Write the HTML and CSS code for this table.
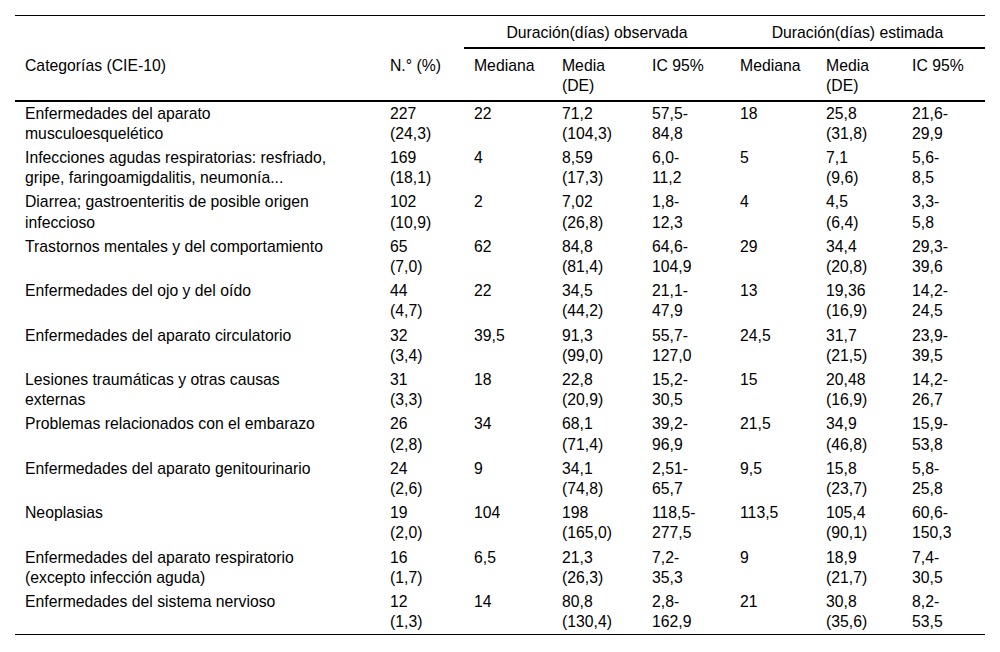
FILE: index.html
```html
<!DOCTYPE html>
<html lang="es">
<head>
<meta charset="utf-8">
<title>Duración por categorías</title>
<link rel="stylesheet" href="styles.css">
</head>
<body>
<div class="page">
<table class="data">
<colgroup>
<col class="c-cat"><col class="c-n"><col class="c-med"><col class="c-mean"><col class="c-ic"><col class="c-med2"><col class="c-mean2"><col class="c-ic2">
</colgroup>
<thead>
<tr class="group-row">
<th></th><th></th>
<th colspan="3" class="group">Duración(días) observada</th>
<th colspan="3" class="group">Duración(días) estimada</th>
</tr>
<tr class="sub-row">
<th>Categorías (CIE-10)</th>
<th>N.° (%)</th>
<th>Mediana</th>
<th>Media<br>(DE)</th>
<th>IC 95%</th>
<th>Mediana</th>
<th>Media<br>(DE)</th>
<th>IC 95%</th>
</tr>
</thead>
<tbody>
<tr><td>Enfermedades del aparato<br>musculoesquelético</td><td>227<br>(24,3)</td><td>22</td><td>71,2<br>(104,3)</td><td>57,5-<br>84,8</td><td>18</td><td>25,8<br>(31,8)</td><td>21,6-<br>29,9</td></tr>
<tr><td>Infecciones agudas respiratorias: resfriado,<br>gripe, faringoamigdalitis, neumonía...</td><td>169<br>(18,1)</td><td>4</td><td>8,59<br>(17,3)</td><td>6,0-<br>11,2</td><td>5</td><td>7,1<br>(9,6)</td><td>5,6-<br>8,5</td></tr>
<tr><td>Diarrea; gastroenteritis de posible origen<br>infeccioso</td><td>102<br>(10,9)</td><td>2</td><td>7,02<br>(26,8)</td><td>1,8-<br>12,3</td><td>4</td><td>4,5<br>(6,4)</td><td>3,3-<br>5,8</td></tr>
<tr><td>Trastornos mentales y del comportamiento</td><td>65<br>(7,0)</td><td>62</td><td>84,8<br>(81,4)</td><td>64,6-<br>104,9</td><td>29</td><td>34,4<br>(20,8)</td><td>29,3-<br>39,6</td></tr>
<tr><td>Enfermedades del ojo y del oído</td><td>44<br>(4,7)</td><td>22</td><td>34,5<br>(44,2)</td><td>21,1-<br>47,9</td><td>13</td><td>19,36<br>(16,9)</td><td>14,2-<br>24,5</td></tr>
<tr><td>Enfermedades del aparato circulatorio</td><td>32<br>(3,4)</td><td>39,5</td><td>91,3<br>(99,0)</td><td>55,7-<br>127,0</td><td>24,5</td><td>31,7<br>(21,5)</td><td>23,9-<br>39,5</td></tr>
<tr><td>Lesiones traumáticas y otras causas<br>externas</td><td>31<br>(3,3)</td><td>18</td><td>22,8<br>(20,9)</td><td>15,2-<br>30,5</td><td>15</td><td>20,48<br>(16,9)</td><td>14,2-<br>26,7</td></tr>
<tr><td>Problemas relacionados con el embarazo</td><td>26<br>(2,8)</td><td>34</td><td>68,1<br>(71,4)</td><td>39,2-<br>96,9</td><td>21,5</td><td>34,9<br>(46,8)</td><td>15,9-<br>53,8</td></tr>
<tr><td>Enfermedades del aparato genitourinario</td><td>24<br>(2,6)</td><td>9</td><td>34,1<br>(74,8)</td><td>2,51-<br>65,7</td><td>9,5</td><td>15,8<br>(23,7)</td><td>5,8-<br>25,8</td></tr>
<tr><td>Neoplasias</td><td>19<br>(2,0)</td><td>104</td><td>198<br>(165,0)</td><td>118,5-<br>277,5</td><td>113,5</td><td>105,4<br>(90,1)</td><td>60,6-<br>150,3</td></tr>
<tr><td>Enfermedades del aparato respiratorio<br>(excepto infección aguda)</td><td>16<br>(1,7)</td><td>6,5</td><td>21,3<br>(26,3)</td><td>7,2-<br>35,3</td><td>9</td><td>18,9<br>(21,7)</td><td>7,4-<br>30,5</td></tr>
<tr><td>Enfermedades del sistema nervioso</td><td>12<br>(1,3)</td><td>14</td><td>80,8<br>(130,4)</td><td>2,8-<br>162,9</td><td>21</td><td>30,8<br>(35,6)</td><td>8,2-<br>53,5</td></tr>
</tbody>
</table>
</div>
</body>
</html>
```

FILE: styles.css
```css
html, body {
  margin: 0;
  padding: 0;
  background: #ffffff;
}

.page {
  padding: 15px;
  font-family: "Liberation Sans", Arial, sans-serif;
  font-size: 15.75px;
  line-height: 20.2px;
  color: #000;
}

.data {
  width: 970px;
  table-layout: fixed;
  border-collapse: separate;
  border-spacing: 0;
  border-top: 1px solid #000;
}

.c-cat { width: 365px; }
.c-n { width: 84px; }
.c-med { width: 88px; }
.c-mean { width: 90px; }
.c-ic { width: 88px; }
.c-med2 { width: 86px; }
.c-mean2 { width: 86px; }
.c-ic2 { width: 83px; }

.data th {
  font-weight: normal;
  text-align: left;
  vertical-align: top;
  padding: 7px 10px 4px;
}

.data th.group {
  text-align: center;
  border-bottom: 2px solid #000;
}

.sub-row th {
  padding-bottom: 3px;
  border-bottom: 2px solid #000;
}

.data td {
  vertical-align: top;
  text-align: left;
  padding: 2px 10px;
}

.data tbody tr:last-child td {
  border-bottom: 1px solid #000;
}
```
